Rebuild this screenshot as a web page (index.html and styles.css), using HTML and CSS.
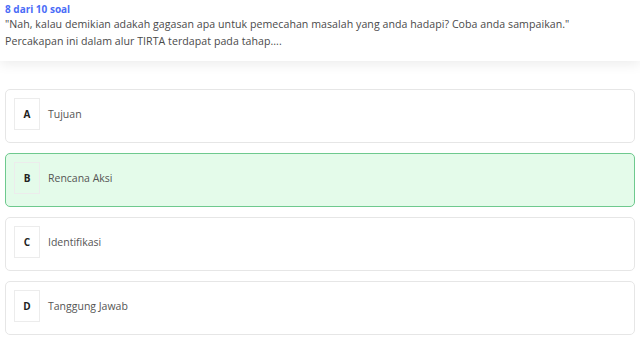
FILE: index.html
```html
<!DOCTYPE html>
<html lang="id">
    <head>
        <meta charset="UTF-8">
        <meta name="viewport" content="width=device-width, initial-scale=1.0">
        <title>Soal 8</title>
        <link rel="stylesheet" href="styles.css">
    </head>
    <body>
        <header class="question">
            <div class="counter">8 dari 10 soal</div>
            <p class="question-text">"Nah, kalau demikian adakah gagasan apa untuk pemecahan masalah yang anda hadapi? Coba anda sampaikan."<br>Percakapan ini dalam alur TIRTA terdapat pada tahap....</p>
        </header>

        <div class="options">
            <div class="option">
                <span class="letter">A</span>
                <span class="label">Tujuan</span>
            </div>
            <div class="option selected">
                <span class="letter">B</span>
                <span class="label">Rencana Aksi</span>
            </div>
            <div class="option">
                <span class="letter">C</span>
                <span class="label">Identifikasi</span>
            </div>
            <div class="option">
                <span class="letter">D</span>
                <span class="label">Tanggung Jawab</span>
            </div>
        </div>
    </body>
</html>
```

FILE: styles.css
```css
* {
    box-sizing: border-box;
    margin: 0;
    padding: 0;
    font-family: 'Open Sans', 'DejaVu Sans', sans-serif;
}

body {
    background: #fff;
    color: #444;
}

.question {
    background: #fff;
    padding: 2px 5px 0;
    height: 61px;
    box-shadow: 0 3px 12px rgba(0, 0, 0, 0.08);
    position: relative;
}

.counter {
    color: #4a6cf7;
    font-weight: 700;
    font-size: 10px;
    line-height: 14px;
}

.question-text {
    font-size: 10.6px;
    letter-spacing: 0.05px;
    line-height: 17px;
    color: #4a4a4a;
}

.options {
    padding: 28px 5px 0;
    display: flex;
    flex-direction: column;
    gap: 10px;
}

.option {
    height: 54px;
    border: 1px solid #e6e6e6;
    border-radius: 5px;
    background: #fff;
    display: flex;
    align-items: flex-start;
    padding: 8px 0 0 8px;
    gap: 8px;
}

.option.selected {
    background: #e4fbea;
    border-color: #6ec98e;
}

.letter {
    width: 26px;
    height: 32px;
    border: 1px solid #ececec;
    display: flex;
    align-items: center;
    justify-content: center;
    font-size: 10px;
    font-weight: 700;
    color: #222;
}

.label {
    font-size: 10.5px;
    line-height: 32px;
    color: #555;
}
```
